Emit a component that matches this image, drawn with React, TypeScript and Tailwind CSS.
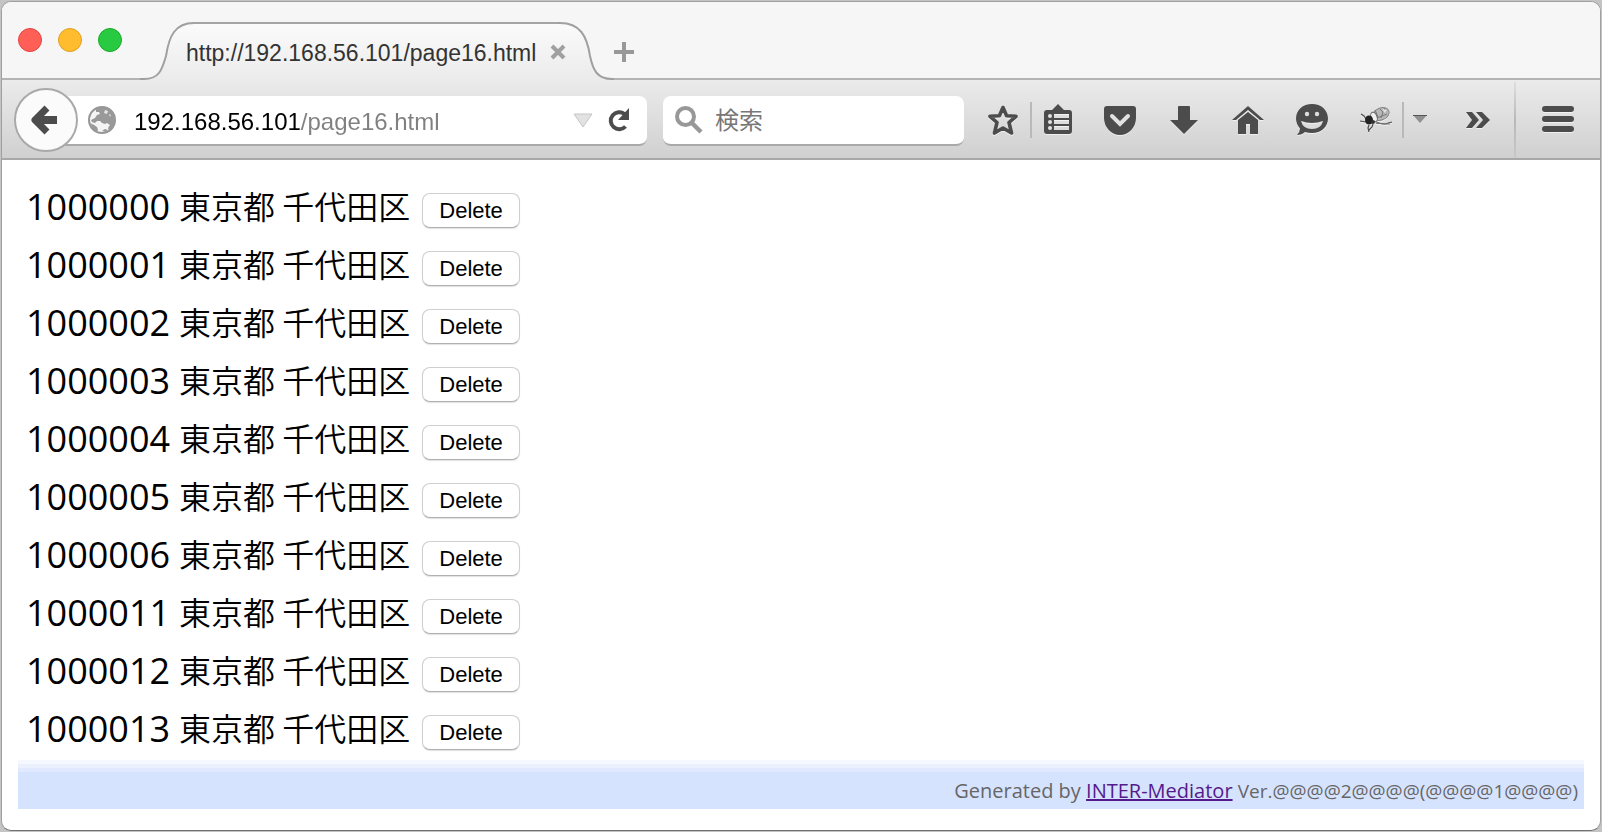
import type { ReactNode } from "react";

const records = [
  { zip: "1000000", pref: "東京都", city: "千代田区" },
  { zip: "1000001", pref: "東京都", city: "千代田区" },
  { zip: "1000002", pref: "東京都", city: "千代田区" },
  { zip: "1000003", pref: "東京都", city: "千代田区" },
  { zip: "1000004", pref: "東京都", city: "千代田区" },
  { zip: "1000005", pref: "東京都", city: "千代田区" },
  { zip: "1000006", pref: "東京都", city: "千代田区" },
  { zip: "1000011", pref: "東京都", city: "千代田区" },
  { zip: "1000012", pref: "東京都", city: "千代田区" },
  { zip: "1000013", pref: "東京都", city: "千代田区" },
];

function IconButton({ label, children }: { label: string; children: ReactNode }) {
  return (
    <button type="button" aria-label={label} className="block h-10 w-10 shrink-0">
      <svg
        viewBox="0 0 40 40"
        className="h-10 w-10 fill-[#4c4c4c] drop-shadow-[0_1px_0_rgba(255,255,255,0.6)]"
      >
        {children}
      </svg>
    </button>
  );
}

function Divider() {
  return <div className="h-9 w-[2px] shrink-0 bg-[#b9b9b9]" />;
}

function TitleBar() {
  return (
    <header className="flex h-[78px] items-end bg-[#f6f6f6]">
      <div className="flex h-full w-[138px] shrink-0 items-center gap-4 border-b-2 border-[#b4b4b4] pl-4">
        <button type="button" aria-label="Close window" className="h-6 w-6 rounded-full border border-[#e2463f] bg-[#ff5f57]" />
        <button type="button" aria-label="Minimize window" className="h-6 w-6 rounded-full border border-[#dfa023] bg-[#ffbd2e]" />
        <button type="button" aria-label="Zoom window" className="h-6 w-6 rounded-full border border-[#1aab29] bg-[#28ca42]" />
      </div>
      <div className="flex h-[58px] shrink-0">
        <svg viewBox="0 0 54 58" className="h-[58px] w-[54px]">
          <defs>
            <linearGradient id="tabLeft" x1="0" y1="0" x2="0" y2="1">
              <stop offset="0" stopColor="#fbfbfb" />
              <stop offset="1" stopColor="#ebebeb" />
            </linearGradient>
          </defs>
          <path d="M0 57H4C19 57 22 48 26 34C29 14 35 1 54 1V58H0Z" fill="url(#tabLeft)" />
          <path d="M0 57H4C19 57 22 48 26 34C29 14 35 1 54 1" fill="none" stroke="#a0a0a0" strokeWidth="2" />
        </svg>
        <div className="relative flex items-center gap-4 border-t-2 border-[#a5a5a5] bg-linear-to-b from-[#fbfbfb] to-[#ebebeb]">
          <span className="-ml-2 pt-[2px] text-[23px] leading-[28px] whitespace-nowrap text-[#333]">
            http://192.168.56.101/page16.html
          </span>
          <button type="button" aria-label="Close tab" className="-mr-2 -ml-[2px] h-4 w-4">
            <svg viewBox="0 0 16 16" className="h-4 w-4 fill-none stroke-[#a0a0a0]" strokeWidth="4">
              <path d="M2 2L14 14M14 2L2 14" />
            </svg>
          </button>
        </div>
        <svg viewBox="0 0 56 58" className="h-[58px] w-14">
          <defs>
            <linearGradient id="tabRight" x1="0" y1="0" x2="0" y2="1">
              <stop offset="0" stopColor="#fbfbfb" />
              <stop offset="1" stopColor="#ebebeb" />
            </linearGradient>
          </defs>
          <path d="M56 57H54C39 57 35 48 32 34C29 14 22 1 2 1H0V58H56Z" fill="url(#tabRight)" />
          <path d="M56 57H54C39 57 35 48 32 34C29 14 22 1 2 1H0" fill="none" stroke="#a0a0a0" strokeWidth="2" />
        </svg>
      </div>
      <div className="flex h-full flex-1 items-center border-b-2 border-[#b4b4b4] pt-6">
        <button type="button" aria-label="New tab" className="h-5 w-5">
          <svg viewBox="0 0 20 20" className="h-5 w-5 fill-[#989898]">
            <path d="M8 0h4v8h8v4h-8v8H8v-8H0V8h8z" />
          </svg>
        </button>
      </div>
    </header>
  );
}

function Toolbar() {
  return (
    <nav className="flex h-20 items-center border-b-2 border-[#a8a8a8] bg-linear-to-b from-[#ebebeb] to-[#d0d0d0] pt-[2px] pl-3">
      <button
        type="button"
        aria-label="Back"
        className="relative flex h-16 w-16 shrink-0 items-center justify-center rounded-full border-2 border-[#a9a9a9] bg-[#fbfbfb] pr-1"
      >
        <svg viewBox="0 0 28 30" className="h-[30px] w-7 fill-none stroke-[#4c4c4c]" strokeWidth="8" strokeLinejoin="round">
          <path d="M17 3L5 15L17 27" strokeWidth="7" />
          <path d="M6 15H27" />
        </svg>
      </button>
      <div className="mt-[2px] -ml-6 flex h-[50px] flex-1 items-center rounded-r-lg border-b-2 border-[#a9a9a9] bg-white pr-4 pl-[34px]">
        <svg viewBox="0 0 28 28" className="h-7 w-7 shrink-0">
          <circle cx="14" cy="14" r="13" fill="#f4f4f4" stroke="#969696" strokeWidth="2" />
          <path
            d="M8 3L14 1L20 2L25 6L27 11L27 16L24 22L21 25L20 22L22 19L19 17L17 18L14 17L12 15L9 15L7 17L4 16L3 14L7 12L9 9L12 8L11 6L8 6Z"
            fill="#999"
          />
          <path d="M2 17L6 19L9 21L10 24L9 26L5 23ZM14 25L17 23L20 24L18 26Z" fill="#999" />
          <path d="M17 4L20 5L19 8L16 7ZM21 8L23 9L22 11Z" fill="#e6e6e6" />
        </svg>
        <input
          type="text"
          aria-label="Address"
          defaultValue="192.168.56.101/page16.html"
          className="ml-[18px] min-w-0 flex-1 bg-linear-to-r from-black from-[167px] to-[#808080] to-[167px] bg-clip-text pt-[3px] text-[24px] leading-8 text-transparent caret-black outline-none"
        />
        <button type="button" aria-label="Show history" className="h-6 w-5">
          <svg viewBox="0 0 20 24" className="h-6 w-5">
            <path d="M1 6H19L10 19Z" fill="#e2e2e2" stroke="#c6c6c6" />
          </svg>
        </button>
        <button type="button" aria-label="Reload" className="ml-[14px] h-6 w-6">
          <svg viewBox="0 0 24 24" className="h-6 w-6">
            <path d="M17.500 6A8.500 8.500 0 1 0 18.500 18.500" fill="none" stroke="#4c4c4c" strokeWidth="4" />
            <path d="M22 0V12H11Z" fill="#4c4c4c" />
          </svg>
        </button>
      </div>
      <label className="mt-[2px] ml-4 flex h-[50px] w-[301px] shrink-0 items-center gap-3 rounded-lg border-b-2 border-[#a9a9a9] bg-white px-3">
        <svg viewBox="0 0 28 28" className="h-7 w-7 shrink-0 fill-none stroke-[#989898]" strokeWidth="4">
          <circle cx="10.500" cy="10.500" r="8.500" />
          <path d="M16 16L26 26" strokeWidth="4.500" />
        </svg>
        <input
          type="search"
          aria-label="検索"
          placeholder="検索"
          className="min-w-0 flex-1 pt-[2px] text-[24px] leading-8 outline-none placeholder:text-[#777]"
        />
      </label>
      <div className="ml-[19px] flex shrink-0 items-center self-stretch">
        <IconButton label="Bookmark this page">
          <path
            d="M20 7.500L23.600 15.800L33 16.300L26 22.500L28.500 33L20 28L11.500 33L14 22.500L7 16.300L16.400 15.800Z"
            fill="none"
            stroke="#4c4c4c"
            strokeWidth="3.600"
            strokeLinejoin="round"
          />
        </IconButton>
        <div className="mr-1.5 ml-[7px]">
          <Divider />
        </div>
        <IconButton label="Show bookmarks">
          <path
            fillRule="evenodd"
            d="M9 10H14L20 4L26 10H31Q34 10 34 13V31Q34 34 31 34H9Q6 34 6 31V13Q6 10 9 10ZM16 14V18H31V14ZM16 20V24H31V20ZM16 26V30H31V26Z"
          />
          <g fill="#e4e4e4">
            <circle cx="12" cy="16" r="2" />
            <circle cx="12" cy="22" r="2" />
            <circle cx="12" cy="28" r="2" />
          </g>
        </IconButton>
        <div className="ml-[22px] flex gap-6">
          <IconButton label="Save to Pocket">
            <path d="M7 6H33Q36 6 36 9V18A16 17 0 0 1 4 18V9Q4 6 7 6Z" />
            <path d="M12 16L20 24L28 16" fill="none" stroke="#e2e2e2" strokeWidth="4" strokeLinecap="round" />
          </IconButton>
          <IconButton label="Downloads">
            <path d="M15 6H25Q26 6 26 7V20H34L20 34L6 20H14V7Q14 6 15 6Z" />
          </IconButton>
          <IconButton label="Home">
            <path d="M4 20L20 6L36 20H32L20 10L8 20Z" />
            <path d="M10 20L20 12L30 20V34H22V24H18V34H10Z" />
          </IconButton>
          <IconButton label="Hello">
            <path
              fillRule="evenodd"
              d="M20 4C29 4 36 10 36 18.500C36 27 29 33 20 33Q16 33 13 32Q10 35 5 35Q8 32 8 28.500Q4 24 4 18.500C4 10 11 4 20 4ZM9 21Q11 29 20 29Q29 29 31 21Q26 23 20 23Q14 23 9 21Z"
            />
            <g fill="#dedede">
              <circle cx="15" cy="14" r="2.200" />
              <circle cx="25" cy="14" r="2.200" />
            </g>
          </IconButton>
          <IconButton label="Firebug">
            <g fill="none" stroke="#4a4a4a" strokeWidth="1.200">
              <path d="M10 19L8 16L5 14M10 22L4 21M13 25L12 28L13 32M17 24L16 27L13 30M20 23L29 24L36 22" />
              <path d="M18 21L26 24L34 24" stroke="#777" />
            </g>
            <ellipse cx="25" cy="14" rx="8.500" ry="6" transform="rotate(-22 25 14)" fill="#b7b7b7" stroke="#888" />
            <path d="M19 10L22 17M21 18L31 14M24 9L27 12L25 18M28 8L30 12" stroke="#777" fill="none" />
            <path d="M26 9L31 10L29 13Z" fill="#e2e2e2" />
            <ellipse cx="18" cy="17" rx="3" ry="5" transform="rotate(-20 18 17)" fill="#f0f0f0" stroke="#666" />
            <ellipse cx="13" cy="20" rx="4" ry="4.500" fill="#222" />
            <circle cx="17" cy="22" r="2" fill="#333" />
          </IconButton>
        </div>
        <div className="mr-2 ml-1.5">
          <Divider />
        </div>
        <button type="button" aria-label="Firebug options" className="h-5 w-4">
          <svg viewBox="0 0 16 20" className="h-5 w-4">
            <path d="M1 5H15L8 13Z" fill="#909090" />
            <path d="M1 5H15V6H1Z" fill="#555" />
          </svg>
        </button>
        <div className="ml-[30px]">
          <IconButton label="More tools">
            <path d="M8 12H14L21 20L14 28H8L14 20ZM18 12H24L32 20L24 28H18L25 20Z" />
          </IconButton>
        </div>
        <div className="mr-[22px] ml-4 w-[2px] self-stretch bg-linear-to-b from-[#dedede] via-[#b8b8b8] to-[#c8c8c8]" />
        <div className="mr-[22px]">
          <IconButton label="Open menu">
            <rect x="4" y="6" width="32" height="6" rx="3" />
            <rect x="4" y="16" width="32" height="6" rx="3" />
            <rect x="4" y="26" width="32" height="6" rx="3" />
          </IconButton>
        </div>
      </div>
    </nav>
  );
}

export default function App() {
  return (
    <div className="min-h-screen bg-[#c4c4c4] px-px pt-px pb-px font-['Liberation_Sans','Noto_Sans_CJK_JP',sans-serif]">
      <div className="overflow-hidden rounded-[10px] border border-[#a0a0a0] border-b-[#707070] bg-white">
        <TitleBar />
        <Toolbar />
        <main className="px-4 pt-5 pb-[21px]">
          <ul className="px-2">
            {records.map((r) => (
              <li key={r.zip} className="flex h-[58px] items-center text-black">
                <span className="pb-1 font-['Open_Sans',sans-serif] text-[36px] leading-[48px] font-[375]">
                  {r.zip}
                </span>
                <span className="ml-[9px] pb-2 font-['Noto_Sans_CJK_JP',sans-serif] text-[32px] leading-[48px] font-[350]">
                  {r.pref} {r.city}
                </span>
                <button
                  type="button"
                  className="mt-[2px] ml-3 h-[35px] rounded-lg border border-[#cfcfcf] border-b-[#b0b0b0] bg-white px-4 pt-px text-[22px] leading-7 shadow-[0_1px_1px_rgba(0,0,0,0.12)]"
                >
                  Delete
                </button>
              </li>
            ))}
          </ul>
          <footer>
            <div className="h-1 bg-[#f6f8ff]" />
            <div className="h-1 bg-[#ebf0ff]" />
            <div className="h-1 bg-[#e0e9ff]" />
            <p className="bg-[#d6e3ff] pt-[5px] pr-1.5 pb-1 text-right font-['Open_Sans',sans-serif] text-[20px] leading-7 text-[#666]">
              Generated by{" "}
              <a href="#inter-mediator" className="text-[#551a8b] underline">
                INTER-Mediator
              </a>{" "}
              <span className="text-[19px]">Ver.@@@@2@@@@(@@@@1@@@@)</span>
            </p>
          </footer>
        </main>
      </div>
    </div>
  );
}
